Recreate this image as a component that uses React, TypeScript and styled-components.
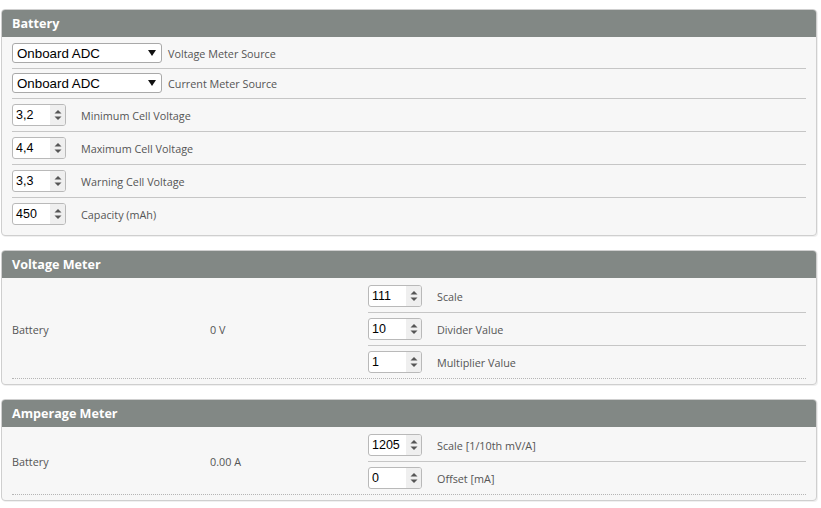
import React from "react";
import styled, { createGlobalStyle } from "styled-components";

const Global = createGlobalStyle`
  html, body { margin: 0; padding: 0; background: #ffffff; }
  body { font-family: "Open Sans", "Liberation Sans", sans-serif; }
  * { box-sizing: border-box; }
`;

const Page = styled.div`
  padding: 9px 4px 0 1px;
  width: 821px;
`;

const Panel = styled.section`
  border: 1px solid #cfcfcf;
  border-radius: 4px;
  background: #f7f7f7;
  margin-bottom: 14px;
  overflow: hidden;
  box-shadow: 1px 1px 0 rgba(0, 0, 0, 0.06);
`;

const Header = styled.div`
  height: 27px;
  background: #828885;
  color: #ffffff;
  display: flex;
  align-items: center;
  padding: 0 10px;
  font-family: "Open Sans", sans-serif;
  font-weight: 700;
  font-size: 12.6px;
`;

const Body = styled.div<{ $top: number }>`
  padding: ${(p) => p.$top}px 10px 5px;
`;

const Row = styled.div<{ $compact?: boolean }>`
  display: flex;
  align-items: center;
  padding: ${(p) => (p.$compact ? "4px 0 5px" : "5px 0")};
  border-bottom: 1px solid #c6c6c6;
  &:last-child {
    border-bottom: none;
  }
`;

const Label = styled.span<{ $gap: number }>`
  margin-left: ${(p) => p.$gap}px;
  font-family: "Open Sans", sans-serif;
  font-size: 10.8px;
  color: #555555;
`;

const SelectBox = styled.div`
  width: 150px;
  height: 20px;
  background: #ffffff;
  border: 1px solid #a9a9a9;
  border-radius: 3px;
  display: flex;
  align-items: center;
  justify-content: space-between;
  padding: 0 5px 0 4px;
  font-family: "Liberation Sans", Arial, sans-serif;
  font-size: 13.33px;
  color: #000;
`;

const NumberBox = styled.div`
  width: 54px;
  height: 22px;
  background: #ffffff;
  border: 1px solid #b9b9b9;
  border-radius: 3px;
  display: flex;
  align-items: stretch;
  overflow: hidden;
`;

const NumberText = styled.span`
  flex: 1;
  display: flex;
  align-items: center;
  padding-left: 3px;
  font-family: "Liberation Sans", Arial, sans-serif;
  font-size: 12.5px;
  color: #000;
`;

const Spinner = styled.span`
  width: 15px;
  background: #efefef;
  display: flex;
  align-items: center;
  justify-content: center;
`;

const MeterTable = styled.div`
  display: flex;
  align-items: stretch;
  border-bottom: 1px dotted #b5b5b5;
`;

const MeterCell = styled.div<{ $w: number }>`
  width: ${(p) => p.$w}px;
  display: flex;
  align-items: center;
  font-family: "Open Sans", sans-serif;
  font-size: 10.8px;
  color: #555555;
`;

const InputsColumn = styled.div`
  flex: 1;
  display: flex;
  flex-direction: column;
`;

const SelectArrow = () => (
  <svg width="8" height="6" viewBox="0 0 8 6">
    <path d="M0 0 H8 L4 6 Z" fill="#111" />
  </svg>
);

const SpinArrows = () => (
  <svg width="8" height="14" viewBox="0 0 8 14">
    <path d="M4 2 L7.5 5.5 H0.5 Z" fill="#555" />
    <path d="M0.5 8.5 H7.5 L4 12 Z" fill="#555" />
  </svg>
);

const FakeSelect = ({ value }: { value: string }) => (
  <SelectBox>
    <span>{value}</span>
    <SelectArrow />
  </SelectBox>
);

const NumberInput = ({ value }: { value: string }) => (
  <NumberBox>
    <NumberText>{value}</NumberText>
    <Spinner>
      <SpinArrows />
    </Spinner>
  </NumberBox>
);

const batteryNumbers = [
  { v: "3,2", l: "Minimum Cell Voltage" },
  { v: "4,4", l: "Maximum Cell Voltage" },
  { v: "3,3", l: "Warning Cell Voltage" },
  { v: "450", l: "Capacity (mAh)" },
];

const Meter = ({
  title,
  value,
  fields,
}: {
  title: string;
  value: string;
  fields: { v: string; l: string }[];
}) => (
  <Panel>
    <Header>{title}</Header>
    <Body $top={2}>
      <MeterTable>
        <MeterCell $w={198}>Battery</MeterCell>
        <MeterCell $w={158}>{value}</MeterCell>
        <InputsColumn>
          {fields.map((f) => (
            <Row key={f.l}>
              <NumberInput value={f.v} />
              <Label $gap={15}>{f.l}</Label>
            </Row>
          ))}
        </InputsColumn>
      </MeterTable>
    </Body>
  </Panel>
);

export default function App() {
  return (
    <Page>
      <Global />
      <Panel>
        <Header>Battery</Header>
        <Body $top={2}>
          <Row $compact>
            <FakeSelect value="Onboard ADC" />
            <Label $gap={6}>Voltage Meter Source</Label>
          </Row>
          <Row $compact>
            <FakeSelect value="Onboard ADC" />
            <Label $gap={6}>Current Meter Source</Label>
          </Row>
          {batteryNumbers.map((f) => (
            <Row key={f.l}>
              <NumberInput value={f.v} />
              <Label $gap={15}>{f.l}</Label>
            </Row>
          ))}
        </Body>
      </Panel>
      <Meter
        title="Voltage Meter"
        value="0 V"
        fields={[
          { v: "111", l: "Scale" },
          { v: "10", l: "Divider Value" },
          { v: "1", l: "Multiplier Value" },
        ]}
      />
      <Meter
        title="Amperage Meter"
        value="0.00 A"
        fields={[
          { v: "1205", l: "Scale [1/10th mV/A]" },
          { v: "0", l: "Offset [mA]" },
        ]}
      />
    </Page>
  );
}
